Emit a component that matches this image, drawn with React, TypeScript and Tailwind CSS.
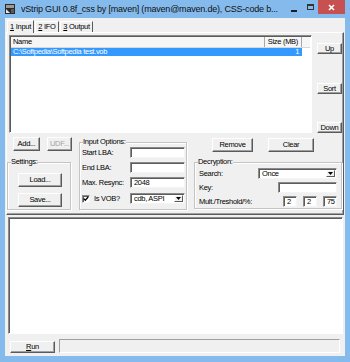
import React from "react";

const FONT = "font-['Liberation_Sans',Arial,sans-serif]";

function Btn({
  children,
  className = "",
  disabled = false,
}: {
  children: React.ReactNode;
  className?: string;
  disabled?: boolean;
}) {
  return (
    <div
      className={`flex items-center justify-center bg-[#f0f0f0] border border-t-white border-l-white border-r-[#5a5a5a] border-b-[#5a5a5a] shadow-[inset_-1px_-1px_0_#a0a0a0] text-[7.5px] leading-none tracking-[-0.3px] whitespace-nowrap ${
        disabled ? "text-[#a3a3a3]" : "text-black"
      } ${className}`}
    >
      {children}
    </div>
  );
}

function Field({ className = "", children }: { className?: string; children?: React.ReactNode }) {
  return (
    <div
      className={`flex items-center bg-white border border-t-[#8a8a8a] border-l-[#8a8a8a] border-r-[#f4f4f4] border-b-[#f4f4f4] shadow-[inset_1px_1px_0_#5c5c5c] pl-[3px] text-[7.5px] leading-none tracking-[-0.3px] text-black ${className}`}
    >
      {children}
    </div>
  );
}

function Combo({ className = "", value }: { className?: string; value: string }) {
  return (
    <div
      className={`flex items-stretch bg-white border border-t-[#8a8a8a] border-l-[#8a8a8a] border-r-[#f4f4f4] border-b-[#f4f4f4] shadow-[inset_1px_1px_0_#5c5c5c] text-[7.5px] leading-none tracking-[-0.3px] text-black ${className}`}
    >
      <span className="flex-1 flex items-center pl-[3px]">{value}</span>
      <span className="w-[9px] my-[1px] mr-[1px] flex items-center justify-center bg-[#f0f0f0] border border-t-white border-l-white border-r-[#5a5a5a] border-b-[#5a5a5a]">
        <svg width="5" height="3" viewBox="0 0 5 3">
          <path d="M0 0H5L2.5 3Z" fill="#000" />
        </svg>
      </span>
    </div>
  );
}

function Group({
  label,
  className = "",
  children,
}: {
  label: string;
  className?: string;
  children: React.ReactNode;
}) {
  return (
    <fieldset className={`border border-[#c4c4c4] shadow-[inset_1px_1px_0_#ffffff,1px_1px_0_#ffffff] min-w-0 flex flex-col ${className}`}>
      <legend className="ml-[3px] text-[7.5px] leading-[8px] tracking-[-0.3px] text-black whitespace-nowrap">
        {label}
      </legend>
      {children}
    </fieldset>
  );
}

function Label({ children, className = "" }: { children: React.ReactNode; className?: string }) {
  return (
    <span className={`text-[7.5px] leading-none tracking-[-0.3px] text-black whitespace-nowrap ${className}`}>
      {children}
    </span>
  );
}

export default function App() {
  return (
    <div className={`w-[350px] h-[362px] bg-[#85baec] flex flex-col overflow-hidden ${FONT}`}>
      {/* Title bar */}
      <div className="h-[18px] flex items-start">
        <div className="ml-[5px] mt-[4px] w-[10px] h-[10px]">
          <svg width="10" height="10" viewBox="0 0 10 10">
            <rect x="0" y="0" width="10" height="10" fill="#2a2a2a" />
            <rect x="1" y="1" width="8" height="3" fill="#9a9a9a" />
            <path d="M1 5L5 9H1Z" fill="#e8e8e8" />
            <rect x="6" y="5" width="3" height="4" fill="#5a5a5a" />
          </svg>
        </div>
        <div className="ml-[6px] mt-[3px] w-[266px] overflow-hidden text-[9px] leading-[12px] tracking-[-0.2px] text-[#111] whitespace-nowrap">
          vStrip GUI 0.8f_css by [maven] (maven@maven.de), CSS-code b...
        </div>
        <div className="ml-auto mr-[5px] flex items-start">
          <div className="w-[6px] h-[2px] bg-[#1e1e1e] mt-[10px]" />
          <div className="ml-[10px] mt-[4px] w-[7px] h-[6px] border border-[#333] border-t-2" />
          <div className="ml-[4px] w-[27px] h-[14px] bg-[#c75050] flex items-center justify-center">
            <svg width="7" height="7" viewBox="0 0 7 7">
              <path d="M1 1L6 6M6 1L1 6" stroke="#fff" strokeWidth="1.6" />
            </svg>
          </div>
        </div>
      </div>

      {/* Client area */}
      <div className="flex-1 mx-[5px] mb-[6px] bg-[#f0f0f0] flex flex-col">
        {/* Tabs */}
        <div className="flex items-end ml-[2px] mt-[2px] h-[13px] -mb-px relative z-10">
          <div className="h-[13px] w-[27px] bg-[#f0f0f0] border-t border-l border-r border-t-white border-l-white border-r-[#5a5a5a] flex items-center justify-center text-[7.5px] leading-none tracking-[-0.3px] text-black">
            <span className="underline">1</span>&nbsp;Input
          </div>
          <div className="h-[11px] mb-px w-[24px] ml-[1px] bg-[#f0f0f0] border-t border-l border-r border-t-white border-l-white border-r-[#5a5a5a] flex items-center justify-center text-[7.5px] leading-none tracking-[-0.3px] text-black">
            <span className="underline">2</span>&nbsp;IFO
          </div>
          <div className="h-[11px] mb-px w-[33px] ml-[1px] bg-[#f0f0f0] border-t border-l border-r border-t-white border-l-white border-r-[#5a5a5a] flex items-center justify-center text-[7.5px] leading-none tracking-[-0.3px] text-black">
            <span className="underline">3</span>&nbsp;Output
          </div>
        </div>

        {/* Tab panel */}
        <div className="ml-[1px] w-[338px] h-[183px] border border-t-white border-l-white border-r-[#5a5a5a] border-b-[#5a5a5a] shadow-[inset_-1px_-1px_0_#a0a0a0] flex flex-col">
          {/* List + side buttons */}
          <div className="flex mt-[2px]">
            <div className="ml-[2px] w-[303px] h-[98px] bg-white border border-t-[#8a8a8a] border-l-[#8a8a8a] border-r-white border-b-white shadow-[inset_1px_1px_0_#5c5c5c] flex flex-col">
              <div className="flex h-[11px] ml-[1px] mt-[1px] mr-[1px] bg-[#f6f6f6] border-b border-[#d8d8d8]">
                <div className="w-[254px] flex items-center pl-[2px] border-r border-[#a8a8a8]">
                  <Label>Name</Label>
                </div>
                <div className="w-[37px] flex items-center justify-end pr-[3px] border-r border-[#a8a8a8]">
                  <Label>Size (MB)</Label>
                </div>
                <div className="flex-1" />
              </div>
              <div className="flex items-center h-[8px] w-[291px] ml-[1px] bg-[#3399ff]">
                <Label className="text-white pl-[2px]">C:\Softpedia\Softpedia test.vob</Label>
                <Label className="text-white ml-auto pr-[3px]">1</Label>
              </div>
            </div>
            <div className="flex flex-col ml-[5px] pt-[8px]">
              <Btn className="w-[25px] h-[11px]">Up</Btn>
              <Btn className="w-[25px] h-[11px] mt-[29px]">Sort</Btn>
              <Btn className="w-[25px] h-[11px] mt-[28px]">Down</Btn>
            </div>
          </div>

          {/* Lower section */}
          <div className="flex items-start mt-[4px]">
            {/* Left column */}
            <div className="w-[65px] flex flex-col">
              <div className="flex">
                <Btn className="ml-[6px] w-[27px] h-[14px]">Add...</Btn>
                <Btn className="ml-[7px] w-[25px] h-[14px]" disabled>
                  UDF...
                </Btn>
              </div>
              <Group label="Settings:" className="mt-[7px] w-[64px] h-[52px]">
                <Btn className="ml-[10px] mt-[7px] w-[44px] h-[14px]">Load...</Btn>
                <Btn className="ml-[10px] mt-[6px] w-[44px] h-[14px]">Save...</Btn>
              </Group>
            </div>

            {/* Input Options */}
            <Group label="Input Options:" className="ml-[7px] mt-[1px] w-[108px] h-[72px]">
              <div className="flex items-center justify-between pl-[2px] pr-[1px] mt-[1px] h-[11px]">
                <Label>Start LBA:</Label>
                <Field className="w-[55px] h-[11px]" />
              </div>
              <div className="flex items-center justify-between pl-[2px] pr-[1px] mt-[4px] h-[11px]">
                <Label>End LBA:</Label>
                <Field className="w-[55px] h-[11px]" />
              </div>
              <div className="flex items-center justify-between pl-[2px] pr-[1px] mt-[4px] h-[11px]">
                <Label>Max. Resync:</Label>
                <Field className="w-[55px] h-[11px]">2048</Field>
              </div>
              <div className="flex items-center justify-between pl-[2px] pr-[1px] mt-[5px] h-[11px]">
                <div className="flex items-center">
                  <div className="w-[8px] h-[8px] bg-white border border-t-[#8a8a8a] border-l-[#8a8a8a] border-r-[#f4f4f4] border-b-[#f4f4f4] shadow-[inset_1px_1px_0_#5c5c5c] flex items-center justify-center">
                    <svg width="6" height="6" viewBox="0 0 6 6">
                      <path d="M0.8 2.6L2.3 4.2L5.2 1" stroke="#000" strokeWidth="1.3" fill="none" />
                    </svg>
                  </div>
                  <Label className="ml-[4px]">Is VOB?</Label>
                </div>
                <Combo className="w-[55px] h-[11px]" value="cdb, ASPI" />
              </div>
            </Group>

            {/* Right column */}
            <div className="ml-[7px] w-[148px] flex flex-col mt-[1px]">
              <div className="flex">
                <Btn className="ml-[18px] w-[41px] h-[14px]">Remove</Btn>
                <Btn className="ml-[15px] w-[46px] h-[14px]">Clear</Btn>
              </div>
              <Group label="Decryption:" className="mt-[6px] w-[148px] h-[51px]">
                <div className="flex items-center pl-[4px] pr-[4px] mt-[2px] h-[11px]">
                  <Label>Search:</Label>
                  <Combo className="ml-auto w-[79px] h-[11px]" value="Once" />
                </div>
                <div className="flex items-center pl-[4px] pr-[4px] mt-[3px] h-[11px]">
                  <Label>Key:</Label>
                  <Field className="ml-auto w-[59px] h-[11px]" />
                </div>
                <div className="flex items-center pl-[4px] pr-[4px] mt-[3px] h-[11px]">
                  <Label>Mult./Treshold/%:</Label>
                  <Field className="ml-auto w-[14px] h-[11px] pl-[2px]">2</Field>
                  <Field className="ml-[6px] w-[14px] h-[11px] pl-[2px]">2</Field>
                  <Field className="ml-[6px] w-[14px] h-[11px] pl-[1px]">75</Field>
                </div>
              </Group>
            </div>
          </div>
        </div>

        {/* Log area */}
        <div className="ml-[3px] mt-[2px] w-[335px] h-[117px] bg-white border border-t-[#8a8a8a] border-l-[#8a8a8a] border-r-white border-b-white shadow-[inset_1px_1px_0_#5c5c5c]" />

        {/* Bottom row */}
        <div className="flex items-end mt-[5px] h-[14px]">
          <Btn className="ml-[5px] w-[45px] h-[12px]">
            <span className="underline">R</span>un
          </Btn>
          <div className="ml-[4px] w-[281px] h-[14px] bg-[#f0f0f0] border border-t-[#a0a0a0] border-l-[#a0a0a0] border-r-white border-b-white" />
        </div>
      </div>
    </div>
  );
}
